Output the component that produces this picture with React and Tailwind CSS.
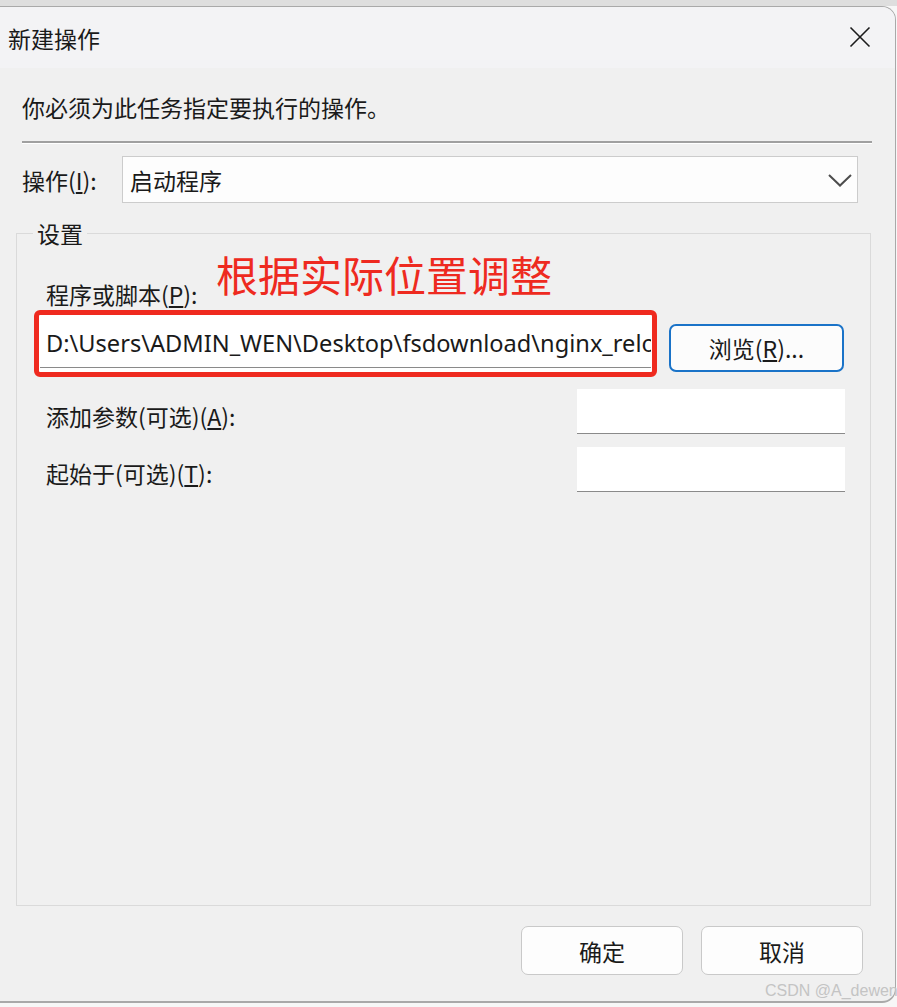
import React from "react";

const cjk = { fontFamily: '"Noto Sans CJK SC", "Noto Sans", sans-serif' };
const latin = { fontFamily: '"Noto Sans", "Noto Sans CJK SC", sans-serif' };

function Field({ className = "" }) {
    return <div className={`h-[45px] w-[268px] border-b border-[#8a8a8a] bg-white ${className}`} />;
}

export default function App() {
    return (
        <div className="relative h-[1007px] w-[897px] overflow-hidden bg-[#f7f7f7]" style={cjk}>
            <div className="h-[6px] w-full bg-[#dedede]" />
            {/* dialog window */}
            <div className="flex h-[997px] w-[896px] flex-col overflow-hidden rounded-r-[14px] border-t border-r border-b-2 border-[#a9a9a9] bg-[#f0f0f0] text-[23px] leading-[30px] text-[#1a1a1a]">
                <div className="flex h-[61px] shrink-0 items-center justify-between bg-[#f3f3f5] pl-[8px] pr-[24px]">
                    <span className="text-[23px]">新建操作</span>
                    <svg width="22" height="22" viewBox="0 0 22 22" className="mt-[-2px]">
                        <path d="M1.5 1.5 L20.5 20.5 M20.5 1.5 L1.5 20.5" stroke="#1b1b1b" strokeWidth="1.6" fill="none" />
                    </svg>
                </div>

                <div className="flex flex-col pl-[22px]">
                    <p className="mt-[24px]">你必须为此任务指定要执行的操作。</p>

                    <div className="mt-[19px] w-[850px] border-t-2 border-b border-t-[#a0a0a0] border-b-white" />

                    <div className="mt-[12px] flex items-center">
                        <span className="w-[100px]">
                            操作(<span className="underline">I</span>):
                        </span>
                        <div className="flex h-[47px] w-[736px] items-center justify-between border border-[#cccccc] bg-[#fdfdfd] pl-[7px] pr-[4px]">
                            <span>启动程序</span>
                            <svg width="26" height="16" viewBox="0 0 26 16">
                                <path d="M2 3 L13 13.5 L24 3" stroke="#4d4d4d" strokeWidth="2" fill="none" />
                            </svg>
                        </div>
                    </div>
                </div>

                {/* 设置 group */}
                <div className="relative ml-[16px] mt-[30px] h-[673px] w-[855px] border border-[#dadada]">
                    <span className="absolute left-[16px] top-[-16px] bg-[#f0f0f0] px-[4px]">设置</span>

                    <span className="absolute left-[199px] top-[15px] text-[42px] leading-[50px] text-[#ee2a20]">根据实际位置调整</span>

                    <div className="flex flex-col pt-[45px]">
                        <span className="ml-[29px]">
                            程序或脚本(<span className="underline">P</span>):
                        </span>

                        <div className="mt-[1px] flex items-start">
                            <div className="ml-[17px] flex h-[67px] w-[623px] items-center rounded-[6px] border-[5px] border-[#ef2a1f] bg-white px-[1px]">
                                <div
                                    className="flex h-[49px] w-full items-center overflow-hidden whitespace-nowrap border-b border-[#8a8a8a] bg-white pl-[6px] text-[23.6px]"
                                    style={latin}
                                >
                                    D:\Users\ADMIN_WEN\Desktop\fsdownload\nginx_relo
                                </div>
                            </div>
                            <button
                                type="button"
                                className="ml-[12px] mt-[14px] flex h-[48px] w-[175px] items-center justify-center rounded-[7px] border-2 border-[#1a73c8] bg-[#fcfcfc] text-[23px]"
                            >
                                浏览(<span className="underline">R</span>)...
                            </button>
                        </div>

                        <div className="mt-[12px] grid grid-cols-[531px_268px] pl-[29px]">
                            <span className="mt-[12px]">
                                添加参数(可选)(<span className="underline">A</span>):
                            </span>
                            <Field />
                        </div>

                        <div className="mt-[13px] grid grid-cols-[531px_268px] pl-[29px]">
                            <span className="mt-[11px]">
                                起始于(可选)(<span className="underline">T</span>):
                            </span>
                            <Field />
                        </div>
                    </div>
                </div>

                <div className="mr-[32px] mt-[20px] flex justify-end gap-[18px]">
                    <button
                        type="button"
                        className="flex h-[49px] w-[162px] items-center justify-center rounded-[7px] border border-[#c9c9c9] bg-[#fdfdfd] text-[23px]"
                    >
                        确定
                    </button>
                    <button
                        type="button"
                        className="flex h-[49px] w-[162px] items-center justify-center rounded-[7px] border border-[#c9c9c9] bg-[#fdfdfd] text-[23px]"
                    >
                        取消
                    </button>
                </div>
            </div>

            <span
                className="absolute left-[765px] top-[981px] whitespace-nowrap text-[16px] leading-[20px] text-[#c4c4c4]"
                style={{ fontFamily: '"Liberation Sans", sans-serif' }}
            >
                CSDN @A_dewen
            </span>
        </div>
    );
}
